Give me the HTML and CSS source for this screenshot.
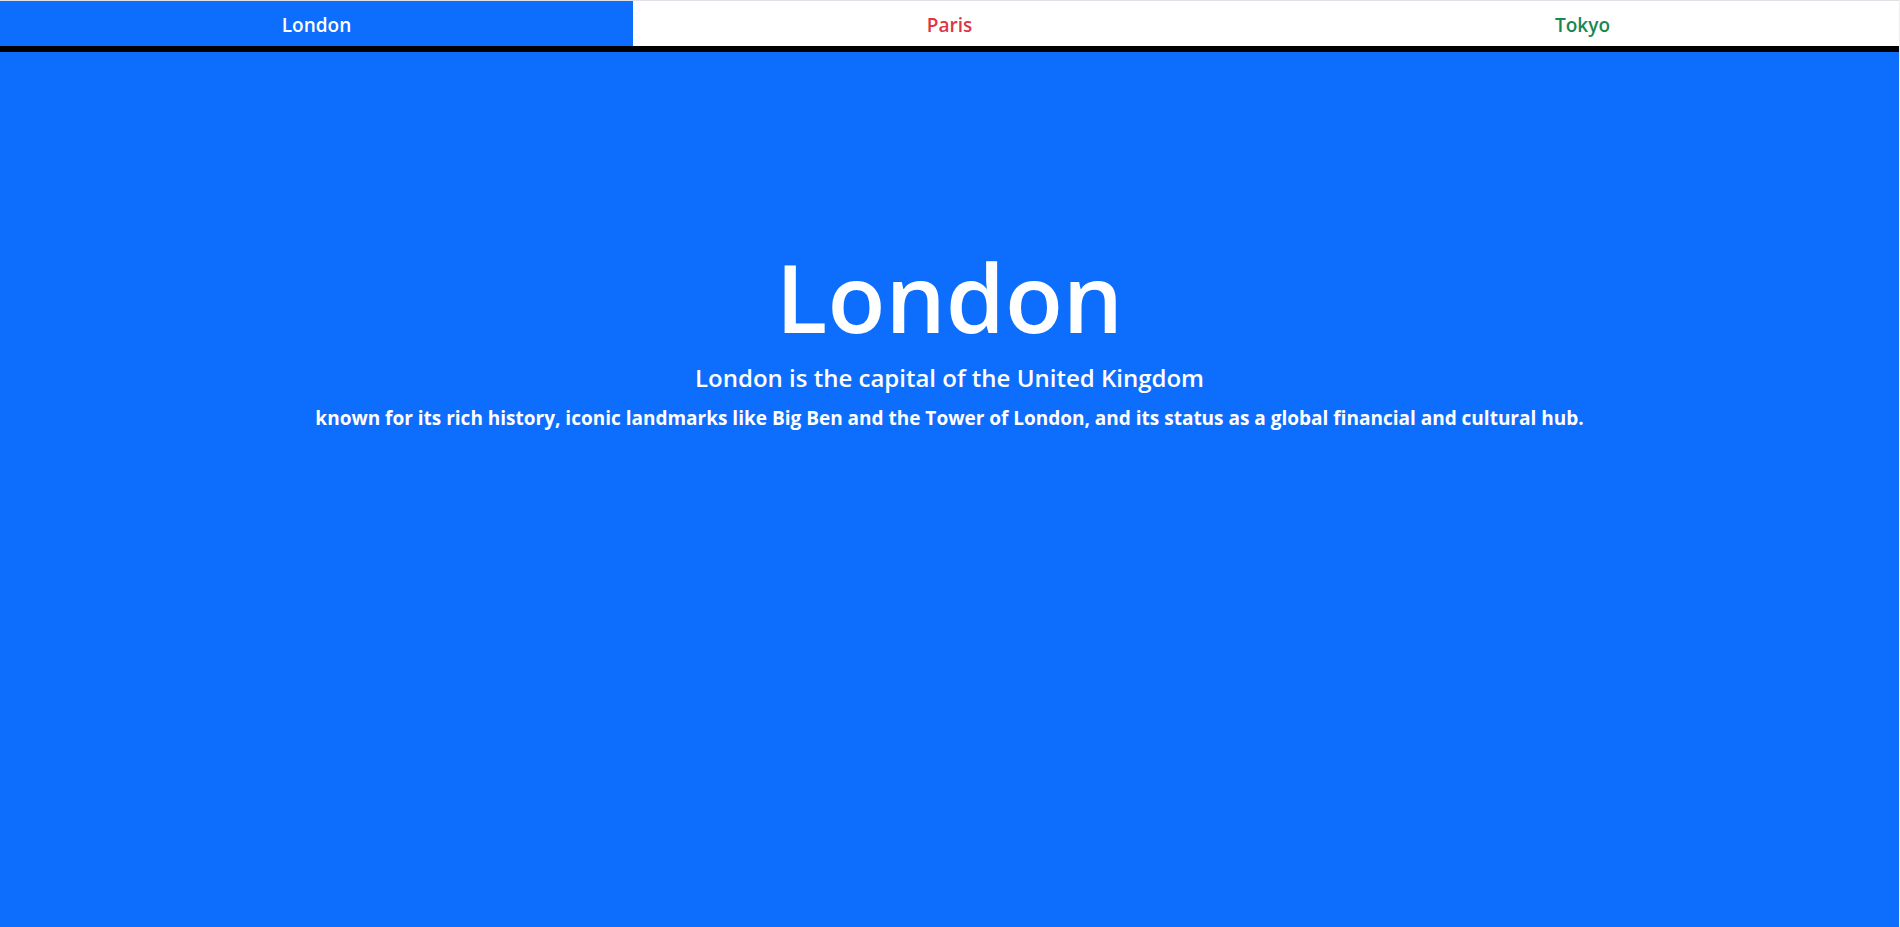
FILE: index.html
```html
<!DOCTYPE html>
<html lang="en">
<head>
<meta charset="utf-8">
<title>Cities</title>
<link rel="stylesheet" href="styles.css">
</head>
<body>
<nav class="tabs">
<button class="tab tab-london active" type="button">London</button>
<button class="tab tab-paris" type="button">Paris</button>
<button class="tab tab-tokyo" type="button">Tokyo</button>
</nav>
<main class="panel">
<h1 class="city">London</h1>
<h4 class="lead">London is the capital of the United Kingdom</h4>
<p class="detail">known for its rich history, iconic landmarks like Big Ben and the Tower of London, and its status as a global financial and cultural hub.</p>
</main>
</body>
</html>
```
FILE: styles.css
```css
* { box-sizing: border-box; }
body {
  margin: 0;
  min-height: 100vh;
  display: flex;
  flex-direction: column;
  border-right: 1px solid #eee;
  font-family: "Segoe UI", "Open Sans", "Noto Sans", sans-serif;
  color: #fff;
}
.tabs {
  display: flex;
  border-top: 1px solid #dee2e6;
  border-bottom: 6px solid #000;
}
.tab {
  flex: 1;
  height: 45px;
  padding: 2px 0 0;
  border: 0;
  background: #fff;
  font: 600 19px/24px "Segoe UI", "Open Sans", "Noto Sans", sans-serif;
  cursor: pointer;
}
.tab-paris { color: #dc3545; }
.tab-tokyo { color: #198754; }
.tab.active { background: #0d6efd; color: #fff; }
.panel {
  flex: 1;
  padding: 186px 24px 24px;
  background: #0d6efd;
  text-align: center;
}
.city { margin: 0 0 8px; font-size: 95px; line-height: 116px; font-weight: 600; }
.lead { margin: 0 0 8px; font-size: 24px; line-height: 32px; font-weight: 600; }
.detail { margin: 0; font-size: 19px; line-height: 32px; font-weight: 700; }
```
